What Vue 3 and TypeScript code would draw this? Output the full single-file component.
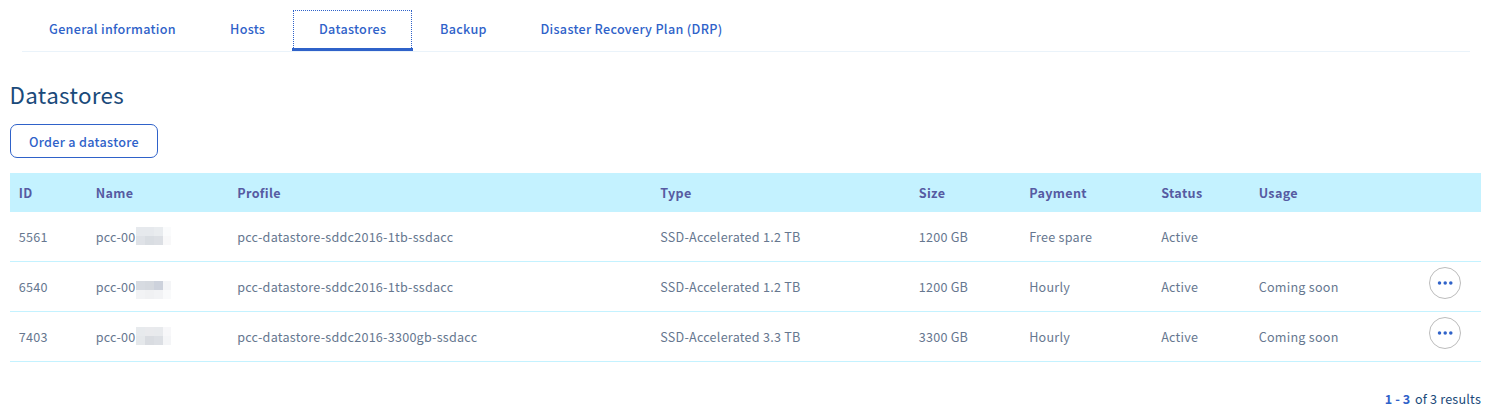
<script setup lang="ts">
interface Datastore {
  id: number
  name: string
  mask: string[]
  profile: string
  type: string
  size: string
  payment: string
  status: string
  usage: string
}

const tabs = [
  { label: 'General information', key: 'general' },
  { label: 'Hosts', key: 'hosts' },
  { label: 'Datastores', key: 'datastores' },
  { label: 'Backup', key: 'backup' },
  { label: 'Disaster Recovery Plan (DRP)', key: 'drp' },
]
const activeTab = 'datastores'

const headers = ['ID', 'Name', 'Profile', 'Type', 'Size', 'Payment', 'Status', 'Usage', '']

const rows: Datastore[] = [
  {
    id: 5561, name: 'pcc-00',
    mask: ['#e6e9ed', '#e6e9ed', '#e9ecef', '#fafbfc', '#dfe2e7', '#d9dde2', '#dcdfe4', '#f8f8f9'],
    profile: 'pcc-datastore-sddc2016-1tb-ssdacc', type: 'SSD-Accelerated 1.2 TB',
    size: '1200 GB', payment: 'Free spare', status: 'Active', usage: '',
  },
  {
    id: 6540, name: 'pcc-00',
    mask: ['#d7dbe1', '#d5d9df', '#cdd2dc', '#f4f5f7', '#f2f3f5', '#f0f1f3', '#f2f3f5', '#f9fafb'],
    profile: 'pcc-datastore-sddc2016-1tb-ssdacc', type: 'SSD-Accelerated 1.2 TB',
    size: '1200 GB', payment: 'Hourly', status: 'Active', usage: 'Coming soon',
  },
  {
    id: 7403, name: 'pcc-00',
    mask: ['#e7eaed', '#e9eaed', '#e8eaed', '#f7f7f9', '#e5e8eb', '#d9dce1', '#dcdfe4', '#f4f5f7'],
    profile: 'pcc-datastore-sddc2016-3300gb-ssdacc', type: 'SSD-Accelerated 3.3 TB',
    size: '3300 GB', payment: 'Hourly', status: 'Active', usage: 'Coming soon',
  },
]
</script>

<template>
  <main class="page">
    <nav class="tabs">
      <a v-for="t in tabs" :key="t.key" class="tab" :class="[t.key, { active: t.key === activeTab }]">{{ t.label }}</a>
    </nav>
    <h1 class="title">Datastores</h1>
    <button class="order" type="button">Order a datastore</button>
    <table class="grid">
      <colgroup>
        <col v-for="(h, i) in headers" :key="i" :class="'c' + i">
      </colgroup>
      <thead>
        <tr><th v-for="(h, i) in headers" :key="i">{{ h }}</th></tr>
      </thead>
      <tbody>
        <tr v-for="(r, n) in rows" :key="r.id">
          <td>{{ r.id }}</td>
          <td>
            <div class="name">
              <span class="prefix">{{ r.name }}</span>
              <span class="mask" :class="'m' + n"><i v-for="(c, i) in r.mask" :key="i" :style="{ background: c }"></i></span>
            </div>
          </td>
          <td>{{ r.profile }}</td>
          <td>{{ r.type }}</td>
          <td>{{ r.size }}</td>
          <td>{{ r.payment }}</td>
          <td>{{ r.status }}</td>
          <td>{{ r.usage }}</td>
          <td class="actions">
            <button v-if="r.usage" class="more" type="button" aria-label="Actions">
              <svg width="16" height="4" viewBox="0 0 16 4">
                <circle cx="2.5" cy="2" r="1.75" />
                <circle cx="8.2" cy="2" r="1.75" />
                <circle cx="13.8" cy="2" r="1.75" />
              </svg>
            </button>
          </td>
        </tr>
      </tbody>
    </table>
    <p class="results"><b>1 - 3</b><span>of 3 results</span></p>
  </main>
</template>

<style>
body {
  background: #fff;
}
</style>

<style scoped>
.page {
  box-sizing: border-box;
  width: 1496px;
  height: 418px;
  padding: 10px 15px 0 10px;
  overflow: hidden;
  font-family: "Noto Sans CJK SC", "Noto Sans", sans-serif;
  font-size: 12.6px;
  line-height: 20px;
  letter-spacing: 0.24px;
  color: #66778f;
}
.tabs {
  display: flex;
  height: 41px;
  margin: 0 11px 0 12px;
  border-bottom: 1px solid #eaf3fa;
}
.tab {
  box-sizing: border-box;
  height: 41px;
  padding: 9px 0 0 27px;
  font-weight: 500;
  letter-spacing: 0.3px;
  color: #2f62c9;
  white-space: nowrap;
}
.general { width: 181px; }
.hosts { width: 89px; }
.datastores { width: 121px; }
.backup { width: 100px; }
.drp {
  width: 236px;
  padding-left: 27.5px;
}
.active {
  position: relative;
  border-bottom: 3px solid #2f62c9;
}
.active::before {
  content: "";
  position: absolute;
  inset: 0 1px 0 1px;
  border: 1px dotted #2f62c9;
  border-bottom: 0;
}
.title {
  margin: 27px 0 14px;
  height: 31px;
  font-size: 22.4px;
  line-height: 31px;
  font-weight: 400;
  letter-spacing: 0.35px;
  text-indent: -0.5px;
  color: #1a4a7a;
}
.order {
  display: block;
  box-sizing: border-box;
  width: 148px;
  height: 34px;
  padding: 1px 0 0 18px;
  text-align: left;
  background: #fff;
  border: 1px solid #2f62c9;
  border-radius: 7px;
  font: inherit;
  font-weight: 500;
  letter-spacing: 0.3px;
  color: #2f62c9;
}
.grid {
  width: 1471px;
  margin-top: 15px;
  table-layout: fixed;
  border-spacing: 0;
}
.c0 { width: 77px; }
.c1 { width: 141.5px; }
.c2 { width: 423px; }
.c3 { width: 258.5px; }
.c4 { width: 110.5px; }
.c5 { width: 132px; }
.c6 { width: 97.5px; }
.c7 { width: 140px; }
th {
  height: 39px;
  padding: 1px 0 0 8.7px;
  box-sizing: border-box;
  background: #c4f2ff;
  color: #565ba2;
  font-weight: 700;
  letter-spacing: 0.35px;
  text-align: left;
}
td {
  box-sizing: border-box;
  height: 50px;
  padding: 1px 0 0 8.7px;
  border-bottom: 1px solid #c4f2ff;
  white-space: nowrap;
}
.name {
  display: flex;
  align-items: center;
}
.prefix { width: 40.3px; }
.mask {
  display: grid;
  grid-template-columns: 9px 9px 9px 8px;
  grid-template-rows: 9px 9px;
}
.m0 { margin-top: -2px; }
.m1 { margin-top: 5px; }
.m2 { margin-top: -2px; }
.actions {
  padding: 0 20px 7px 0;
}
.more {
  display: flex;
  align-items: center;
  justify-content: center;
  box-sizing: border-box;
  width: 32px;
  height: 32px;
  margin-left: auto;
  padding: 0;
  background: #fff;
  border: 1px solid #bcbcbc;
  border-radius: 50%;
}
.more svg { fill: #2f62c9; }
.results {
  display: flex;
  justify-content: flex-end;
  gap: 4.5px;
  margin: 27px 0 0;
  letter-spacing: 0.2px;
  color: #1a4a7a;
}
.results b {
  font-weight: 700;
  letter-spacing: 0.1px;
  color: #2f62c9;
}
</style>
